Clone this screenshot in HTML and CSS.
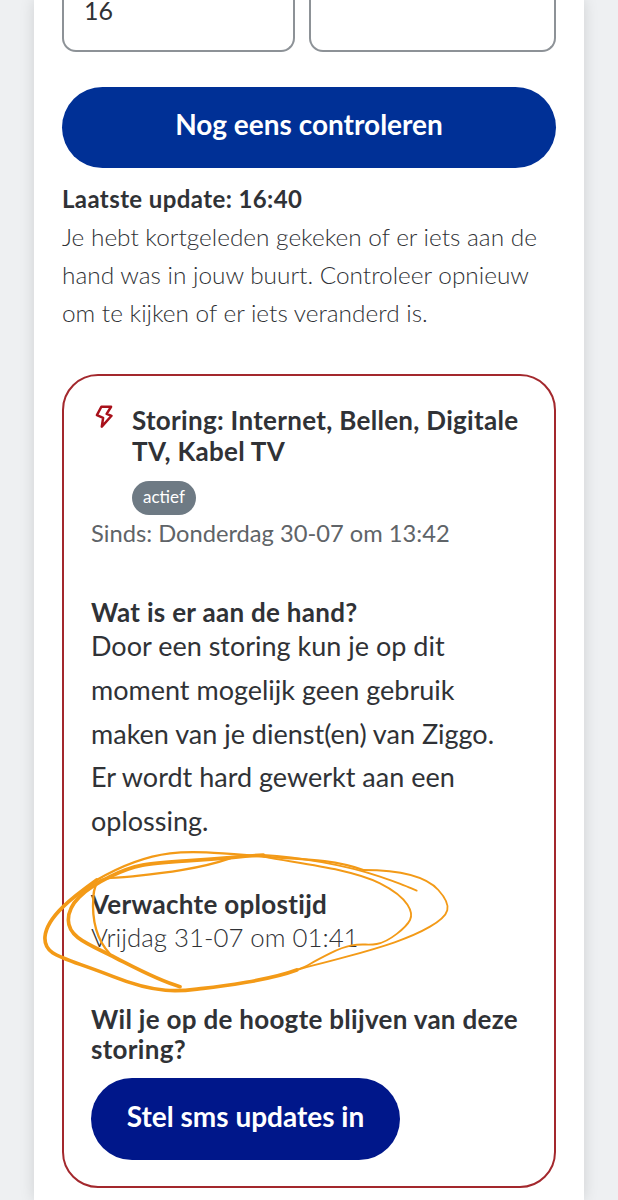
FILE: index.html
```html
<!DOCTYPE html>
<html lang="nl">
<head>
<meta charset="utf-8">
<title>Storing</title>
<link rel="stylesheet" href="styles.css">
</head>
<body>
<main class="sheet">
  <div class="fields">
    <div class="field field-a">16</div>
    <div class="field field-b"></div>
  </div>
  <button class="btn btn-wide">Nog eens controleren</button>
  <p class="update-title">Laatste update: 16:40</p>
  <p class="update-text">Je hebt kortgeleden gekeken of er iets aan de hand was in jouw buurt. Controleer opnieuw om te kijken of er iets veranderd is.</p>
  <section class="outage">
    <div class="outage-head">
      <svg class="bolt" viewBox="0 0 20 26" aria-hidden="true"><path d="M7 2h11l-5 8 5.500 2.200L7.500 24.500l1.500-10L2 11.500z"/></svg>
      <h2 class="outage-title">Storing: Internet, Bellen, Digitale TV, Kabel TV</h2>
    </div>
    <span class="badge">actief</span>
    <p class="since">Sinds: Donderdag 30-07 om 13:42</p>
    <h3 class="label label-what">Wat is er aan de hand?</h3>
    <p class="body-text">Door een storing kun je op dit moment mogelijk geen gebruik maken van je dienst(en) van Ziggo. Er wordt hard gewerkt aan een oplossing.</p>
    <h3 class="label label-eta">Verwachte oplostijd</h3>
    <p class="eta">Vrijdag 31-07 om 01:41</p>
    <h3 class="label label-sms">Wil je op de hoogte blijven van deze storing?</h3>
    <button class="btn btn-sms">Stel sms updates in</button>
  </section>
</main>
<svg class="scribble" viewBox="0 0 1290 480" aria-hidden="true">
  <g class="ink">
    <path class="ink-thick" d="M200 120C130 170 50 230 45 290S100 350 250 410S470 450 520 445S720 420 800 390"/>
    <path class="ink-mid" d="M200 120C260 85 340 50 420 40S600 42 700 50S900 55 1000 90"/>
    <path class="ink-thin" d="M1000 90C1080 90 1180 100 1225 150S1260 225 1200 260S1060 320 950 350S850 375 800 390"/>
    <path class="ink-thick" d="M450 440C380 420 310 380 240 345S115 290 115 240S160 150 240 110S360 70 480 62S620 50 700 45"/>
    <path class="ink-thin" d="M700 45C800 50 950 75 1050 110S1130 140 1160 152"/>
    <path class="ink-mid" d="M240 342C200 300 185 240 190 170S230 118 300 110S500 90 600 55"/>
    <path class="ink-thin" d="M700 50C800 70 960 85 1050 130S1150 220 1140 240S1080 305 1040 312S980 300 900 340S850 370 800 390"/>
  </g>
</svg>
</body>
</html>
```
FILE: styles.css
```css
html, body {
  margin: 0;
  padding: 0;
}
body {
  position: relative;
  width: 618px;
  height: 1200px;
  overflow: hidden;
  background: #eef0f2;
  font-family: "Lato", "Liberation Sans", sans-serif;
  color: #303236;
}
p, h2, h3 {
  margin: 0;
}
.sheet {
  box-sizing: border-box;
  width: 550px;
  height: 1200px;
  margin-left: 34px;
  padding: 0 28px;
  background: #fff;
  box-shadow: 0 0 14px rgba(0, 0, 0, 0.13);
}
.fields {
  display: flex;
  gap: 14px;
  height: 52px;
}
.field {
  box-sizing: border-box;
  height: 100%;
  border: 2px solid #8d9297;
  border-top: 0;
  border-radius: 0 0 14px 14px;
  font-size: 25px;
  padding-left: 20px;
  line-height: 20px;
}
.field-a {
  width: 233px;
}
.field-b {
  width: 247px;
}
.btn {
  display: block;
  border: 0;
  color: #fff;
  font: 700 28px "Lato", "Liberation Sans", sans-serif;
}
.btn-wide {
  width: 494px;
  height: 81px;
  border-radius: 41px;
  margin-top: 35px;
  padding-bottom: 8px;
  background: #003096;
}
.update-title {
  margin-top: 16px;
  font-size: 24px;
  font-weight: 700;
  letter-spacing: 0.4px;
  line-height: 30px;
}
.update-text {
  font-size: 24.400px;
  font-weight: 300;
  line-height: 38px;
  margin-top: 4px;
}
.outage {
  box-sizing: border-box;
  width: 494px;
  height: 814px;
  margin-top: 42px;
  padding: 29px 27px 0;
  border: 2px solid #a3282d;
  border-radius: 36px;
}
.outage-head {
  display: flex;
  gap: 19px;
}
.bolt {
  flex: none;
  width: 18px;
  height: 23px;
  margin-left: 4px;
  fill: none;
  stroke: #a8101a;
  stroke-width: 2.800;
  stroke-linejoin: round;
}
.outage-title {
  font-size: 26px;
  font-weight: 700;
  letter-spacing: 0.3px;
  line-height: 31px;
}
.badge {
  display: inline-block;
  margin: 14px 0 0 41px;
  padding: 0 11px;
  height: 34px;
  line-height: 32px;
  border-radius: 17px;
  background: #6e7a84;
  color: #fff;
  font-size: 17px;
}
.since {
  color: #5f6468;
  font-size: 23.700px;
  line-height: 36px;
}
.label {
  font-size: 26px;
  font-weight: 700;
  letter-spacing: 0.3px;
  line-height: 30px;
}
.label-what {
  margin-top: 46px;
}
.body-text {
  max-width: 425px;
  font-size: 27px;
  line-height: 43.800px;
  margin-top: -3px;
}
.label-eta {
  margin-top: 46px;
}
.eta {
  font-size: 25.800px;
  line-height: 36px;
  font-weight: 300;
}
.label-sms {
  margin-top: 49px;
}
.btn-sms {
  width: 309px;
  height: 82px;
  border-radius: 41px;
  margin-top: 14px;
  padding-bottom: 6px;
  background: #00178a;
}
.scribble {
  position: absolute;
  left: 30px;
  top: 840px;
  width: 430px;
  height: 160px;
}
.ink {
  fill: none;
  stroke: #f39a17;
  stroke-linecap: round;
}
.ink-thick {
  stroke-width: 11;
}
.ink-mid {
  stroke-width: 7;
}
.ink-thin {
  stroke-width: 5.500;
}
```
